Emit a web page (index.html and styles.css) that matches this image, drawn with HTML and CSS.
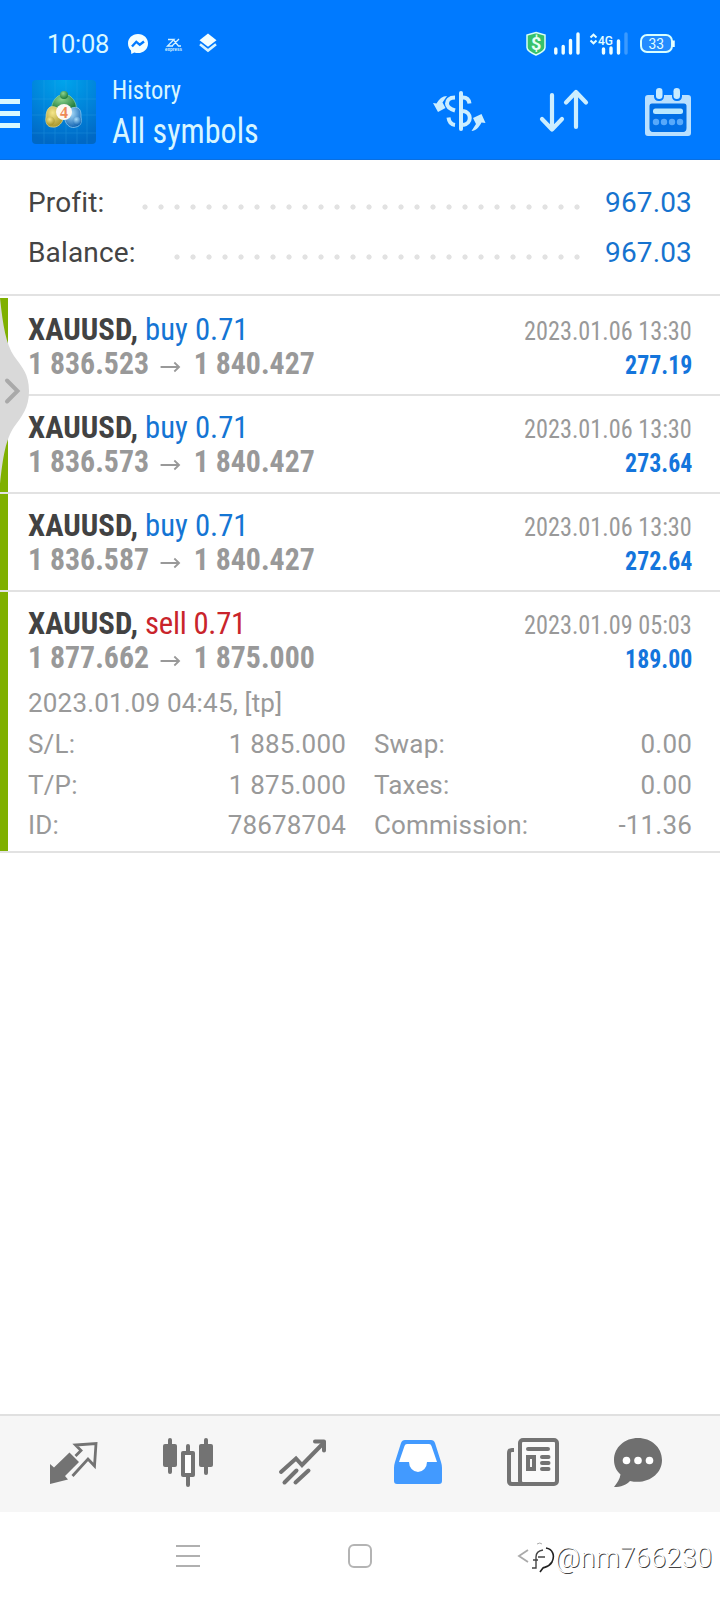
FILE: index.html
```html
<!DOCTYPE html>
<html lang="en">
<head>
<meta charset="utf-8">
<title>History</title>
<link rel="stylesheet" href="styles.css">
</head>
<body>
<div class="app">
  <header class="header">
    <div class="status">
      <span class="clock">10:08</span>
      <svg class="messenger" width="22" height="22" viewBox="0 0 22 22"><path d="M11 1C5 1 1 5.300 1 10.500c0 3 1.400 5.500 3 7.100L4.300 21l3-1.400C15 21.700 21 17 21 10.500 21 5.300 17 1 11 1Z" fill="#f4ffff"/><path d="m5 13.500 4.300-4.700 3.500 3 4.200-3.300" fill="none" stroke="#007aff" stroke-width="2.400"/></svg>
      <svg class="express" width="24" height="24" viewBox="-2 -3 24 24"><path d="M4 1.500h6L3.500 8H9M8 8l7-7M10 2.500 14.500 8H17" fill="none" stroke="#d8f4ff" stroke-width="1.300"/><text x="1" y="12.800" textLength="17" lengthAdjust="spacingAndGlyphs">express</text></svg>
      <svg class="layers" width="20" height="22" viewBox="0 0 20 22"><path d="m10 1.500 8.500 6.800-8.500 6.500-8.500-6.500Z" fill="#f4ffff"/><path d="m2 12.300 8 6.200 8-6.200" fill="none" stroke="#d8f4ff" stroke-width="2.600"/></svg>
      <span class="spacer"></span>
      <svg width="152" height="26" viewBox="0 0 152 26">
        <path d="m11 1.500 9 2.500v12.500c0 3-5.500 6-9 7.500-3.500-1.500-9-4.500-9-7.500V4Z" fill="#37c26b" stroke="#d8fff4" stroke-width="1.500"/>
        <text class="shield-text" x="6" y="19">$</text>
        <path d="M30.800 18v4M38.200 15.500v6.500M45.500 9.500v12.500M53 3v19" stroke="#f0ffff" stroke-width="3.400" stroke-linecap="round" fill="none"/>
        <path d="m65.500 6.500 3-2.800 3 2.800M65.500 9.500l3 2.800 3-2.800" fill="none" stroke="#e4ffff" stroke-width="2"/>
        <text class="net-text" x="73" y="13.500" textLength="15" lengthAdjust="spacingAndGlyphs">4G</text>
        <path d="M78.500 18v4M86 17v5M93.500 10v12" stroke="#f0ffff" stroke-width="3.400" stroke-linecap="round"/>
        <path d="M101 3v19" stroke="#3b9aff" stroke-width="3.400" stroke-linecap="round"/>
        <rect x="116" y="4" width="31" height="17" rx="6" fill="#238cff" stroke="#d8ffff" stroke-width="2"/>
        <path d="M148.500 9.500v6.500" stroke="#e8ffff" stroke-width="2.500"/>
        <text class="batt-text" x="123.500" y="17.500" textLength="15.500" lengthAdjust="spacingAndGlyphs">33</text>
      </svg>
    </div>
    <div class="toolbar">
      <div class="menu"><i></i><i></i><i></i></div>
      <svg class="logo" width="64" height="64" viewBox="0 0 64 64">
        <defs>
          <radialGradient id="bg" cx=".5" cy="0" r="1"><stop offset="0" stop-color="#00a5ec"/><stop offset=".6" stop-color="#0080d8"/><stop offset="1" stop-color="#0068c4"/></radialGradient>
          <radialGradient id="gr" cx=".4" cy=".3" r=".7"><stop offset="0" stop-color="#8fd48c"/><stop offset="1" stop-color="#1d7a3c"/></radialGradient>
          <radialGradient id="ye" cx=".4" cy=".3" r=".7"><stop offset="0" stop-color="#f5e68a"/><stop offset="1" stop-color="#a8962c"/></radialGradient>
          <radialGradient id="bl" cx=".4" cy=".3" r=".7"><stop offset="0" stop-color="#a8dcfa"/><stop offset="1" stop-color="#1667b4"/></radialGradient>
        </defs>
        <rect width="64" height="64" rx="4" fill="url(#bg)"/>
        <path d="M12 0v64M23 0v64M34 0v64M45 0v64M55 0v64M0 19h64M0 35h64M0 53h64" stroke="#3bb0ee" stroke-width=".7" opacity=".35"/>
        <path d="M25 17c2-3 12-3 14 0 4 3 6 9 5 13H20c-1-4 1-10 5-13Z" fill="url(#gr)" stroke="#8fd6a0" stroke-width=".7"/>
        <circle cx="32" cy="15" r="4" fill="url(#gr)"/>
        <path d="M18 27c6-2 14 4 13 12-1 5-6 9-11 8-5 0-7-5-6-10 0-4 1-8 4-10Z" fill="url(#ye)" stroke="#e8dc90" stroke-width=".7"/>
        <circle cx="18.500" cy="41" r="4.200" fill="url(#ye)"/>
        <path d="M46 28c-6-3-15 4-13 12 1 5 6 9 11 7 5-1 6-5 5-10 0-4 0-7-3-9Z" fill="url(#bl)" stroke="#9ad2f6" stroke-width=".7"/>
        <circle cx="45" cy="41" r="4.200" fill="url(#bl)"/>
        <circle cx="32" cy="32" r="8" fill="#fdf8f2"/>
        <text class="four" x="28" y="37.500">4</text>
      </svg>
      <div class="titles">
        <div class="cond title-small">History</div>
        <div class="cond title-big">All symbols</div>
      </div>
      <div class="actions">
        <svg width="54" height="42" viewBox="0 0 54 42">
          <g fill="none" stroke="#cceeff" stroke-width="4"><path d="M28 3v36" stroke-linecap="round"/><path d="M22 7.500c-6 0-8 3-8 6s3 5.500 8 7M30 7.500c3.500 0 6 2 6.500 6M30 21c9 1 9 13 0 14M22 35c-4-.500-6-3-6.500-7.500"/></g>
          <path d="M14 6 9.500 12.500 12.500 18 5 22 0 13l3.500.5C6 9 9.500 6 14 6ZM38.500 41l4.500-7-3-6 8.500-4 4 9-4-.5C46 37.500 43 40.500 38.500 41Z" fill="#cceeff"/>
        </svg>
        <svg width="50" height="44" viewBox="0 0 50 44"><path d="M13 6v34M3 30l10 10.500L23 30M37 38V4M27 13.500 37 3l10 10.500" fill="none" stroke="#cceeff" stroke-width="4.200" stroke-linecap="round" stroke-linejoin="round"/></svg>
        <svg width="46" height="48" viewBox="0 0 46 48">
          <path fill-rule="evenodd" d="M3 7h40q3 0 3 3v35q0 3-3 3H3q-3 0-3-3V10q0-3 3-3ZM7 16q-2 0-2 2v22q0 4 4 4h28q4 0 4-4V18q0-2-2-2Z" fill="#b9e0ff"/>
          <path d="M7 15.500h32q2.500 0 2.500 2.500v22q0 4-4 4h-29q-4 0-4-4V18q0-2.500 2.500-2.500Z" fill="#006fe6"/>
          <rect x="9" y="0" width="10" height="13" rx="4.500" fill="#007aff"/><rect x="27" y="0" width="10" height="13" rx="4.500" fill="#007aff"/>
          <rect x="11" y="0" width="6.500" height="11" rx="3.200" fill="#c8ebff"/><rect x="28.500" y="0" width="6.500" height="11" rx="3.200" fill="#c8ebff"/>
          <rect x="8" y="20.500" width="30" height="5.500" rx="2.500" fill="#b9e8ff"/>
          <g fill="#57a9fb"><circle cx="11" cy="34" r="3.200"/><circle cx="19" cy="34" r="3.200"/><circle cx="27" cy="34" r="3.200"/><circle cx="35" cy="34" r="3.200"/></g>
        </svg>
      </div>
    </div>
  </header>

  <section class="summary">
    <div class="sum-row"><span>Profit:</span><i class="dots dots-profit"></i><b>967.03</b></div>
    <div class="sum-row"><span>Balance:</span><i class="dots dots-balance"></i><b>967.03</b></div>
  </section>

  <main class="deals">
    <article class="deal">
      <div class="line"><div class="cond name"><b>XAUUSD,</b> <span class="buy">buy 0.71</span></div><div class="cond date">2023.01.06 13:30</div></div>
      <div class="line"><div class="cond price"><span>1 836.523</span><svg class="arrow" width="22" height="12" viewBox="0 0 22 12"><path d="M0 6h20M15 1.500 20 6l-5 4.500"/></svg><span>1 840.427</span></div><div class="cond gain">277.19</div></div>
    </article>
    <article class="deal">
      <div class="line"><div class="cond name"><b>XAUUSD,</b> <span class="buy">buy 0.71</span></div><div class="cond date">2023.01.06 13:30</div></div>
      <div class="line"><div class="cond price"><span>1 836.573</span><svg class="arrow" width="22" height="12" viewBox="0 0 22 12"><path d="M0 6h20M15 1.500 20 6l-5 4.500"/></svg><span>1 840.427</span></div><div class="cond gain">273.64</div></div>
    </article>
    <article class="deal">
      <div class="line"><div class="cond name"><b>XAUUSD,</b> <span class="buy">buy 0.71</span></div><div class="cond date">2023.01.06 13:30</div></div>
      <div class="line"><div class="cond price"><span>1 836.587</span><svg class="arrow" width="22" height="12" viewBox="0 0 22 12"><path d="M0 6h20M15 1.500 20 6l-5 4.500"/></svg><span>1 840.427</span></div><div class="cond gain">272.64</div></div>
    </article>
    <article class="deal open">
      <div class="line"><div class="cond name"><b>XAUUSD,</b> <span class="sell">sell 0.71</span></div><div class="cond date">2023.01.09 05:03</div></div>
      <div class="line"><div class="cond price"><span>1 877.662</span><svg class="arrow" width="22" height="12" viewBox="0 0 22 12"><path d="M0 6h20M15 1.500 20 6l-5 4.500"/></svg><span>1 875.000</span></div><div class="cond gain">189.00</div></div>
      <div class="opened">2023.01.09 04:45, [tp]</div>
      <div class="details">
        <span>S/L:</span><span class="val">1 885.000</span><span class="second">Swap:</span><span class="val">0.00</span>
        <span>T/P:</span><span class="val">1 875.000</span><span class="second">Taxes:</span><span class="val">0.00</span>
        <span>ID:</span><span class="val">78678704</span><span class="second">Commission:</span><span class="val">-11.36</span>
      </div>
    </article>
    <svg class="handle" width="30" height="186" viewBox="0 0 30 186"><path d="M0 0C3 28 6 46 14 58c8 11 15 18 15 35s-7 25-15 36C6 141 3 158 0 186Z" fill="#d9d9d9"/><path d="m7 82.500 10.500 10.500L7 103.500" fill="none" stroke="#a9a9a9" stroke-width="4" stroke-linecap="round"/></svg>
  </main>

  <nav class="tabs">
    <svg width="50" height="50" viewBox="0 0 50 50"><path d="M20.500 14.500 30 24 16 38l3 3.500L1 46V26l4 3.500Z" fill="#737373"/><path d="m26.500 18 5.500-5.500L26.500 7 47 5.500 45.500 28l-6.500-7-15.500 17" fill="none" stroke="#737373" stroke-width="2.800"/></svg>
    <svg width="50" height="50" viewBox="0 0 50 50"><g fill="#737373"><rect x="0" y="6" width="14" height="23" rx="2"/><rect x="5" y="0" width="4" height="36" rx="2"/><rect x="36" y="6" width="14" height="23" rx="2"/><rect x="41" y="0" width="4" height="37" rx="2"/><rect x="23" y="6" width="4" height="43" rx="2"/><rect x="18" y="13" width="14" height="26" rx="2"/></g><rect x="22" y="17" width="6" height="18" fill="#fff"/></svg>
    <svg width="50" height="50" viewBox="0 0 50 50"><g fill="none" stroke="#737373" stroke-width="4" stroke-linecap="round"><path d="M3 34 18 20.500 24 27 46 4.500"/><path d="M37 3.500h9v9" stroke-linejoin="round"/><path d="m6.500 44.500 12-12M17.500 44.500l13-12"/></g></svg>
    <svg width="50" height="50" viewBox="0 0 50 50"><path d="M12 2h26q3 0 4 3l6 19q1 3 1 6v13q0 3-3 3H4q-3 0-3-3V30q0-3 1-6l6-19q1-3 4-3Z" fill="#429aff"/><path d="M14 6q-2 0-2.500 2L6 24h10a9 10 0 0 0 18 0h10L38.500 8Q38 6 36 6Z" fill="#fff"/></svg>
    <svg width="52" height="50" viewBox="0 0 52 50"><rect x="13" y="2" width="37" height="44" rx="3" fill="#fafafa" stroke="#737373" stroke-width="4"/><path d="M7 12H5q-3 0-3 3v28q0 3 3 3h12" fill="none" stroke="#737373" stroke-width="4"/><path d="M21 11h20M35 19h6.500M35 25h6.500M35 31h6.500" stroke="#737373" stroke-width="4" stroke-linecap="round"/><path d="M19 17h10v16H19ZM23 21v8h2v-8Z" fill-rule="evenodd" fill="#737373"/></svg>
    <svg width="50" height="50" viewBox="0 0 50 50"><path d="M25 0C12 0 1 9 1 22c0 6 2.500 11 6.500 14.500C7 41 4 45 1 49c7 0 12-2 16-6 18 4 32-7 32-21C49 9 38 0 25 0Z" fill="#6f6f6f"/><g fill="#fff"><circle cx="13.500" cy="22.500" r="3.800"/><circle cx="25" cy="22.500" r="3.800"/><circle cx="36.500" cy="22.500" r="3.800"/></g></svg>
  </nav>

  <footer class="system">
    <svg class="recent" width="24" height="24" viewBox="0 0 24 24"><path d="M0 2h24M0 12h24M0 22h24" stroke="#b0b0b0" stroke-width="2"/></svg>
    <svg class="home" width="24" height="24" viewBox="0 0 24 24"><rect x="1" y="1" width="22" height="22" rx="5" fill="none" stroke="#b4b4b4" stroke-width="2"/></svg>
    <svg class="back" width="38" height="34" viewBox="0 0 38 34"><path d="m11 8-9 6 9 6" fill="none" stroke="#aaa" stroke-width="1.800"/><path d="M15 26h4V15q0-6 7-7M16 18h5M21 15h7" fill="none" stroke="#444" stroke-width="1.400"/><path d="M29 6c7 1 9 8 6 14-3 5-7 5-9 6l-3 4" fill="none" stroke="#222" stroke-width="1.600"/><path d="M20 2q3-2 5 0" fill="none" stroke="#aaa" stroke-width="1"/></svg>
    <span class="handle-name">@nm766230</span>
  </footer>
</div>
</body>
</html>
```

FILE: styles.css
```css
* { box-sizing: border-box; }
body { margin: 0; background: #fff; font-family: Roboto, "Liberation Sans", sans-serif; }
.app { width: 720px; height: 1600px; display: flex; flex-direction: column; overflow: hidden; }
svg { display: block; flex: none; }

.cond { font-family: Roboto, sans-serif; font-stretch: 75%; white-space: nowrap; transform-origin: left; }

.header { height: 160px; flex: none; background: #007aff; border-bottom: 1px solid #0a6fe0; }
.status { height: 72px; padding: 31px 43px 0 47px; display: flex; align-items: flex-start; }
.clock { width: 80px; font-size: 25.500px; line-height: 27px; color: #d8f8ff; letter-spacing: -.3px; }
.messenger { margin-top: 2px; }
.express { margin: 4px 0 0 13px; }
.express text { font: bold 5.500px "Liberation Sans", sans-serif; fill: #d8f4ff; }
.layers { margin: 1px 0 0 12px; }
.spacer { flex: 1; }
.shield-text { font: bold 18px Roboto, sans-serif; fill: #e8fff4; }
.net-text { font: 500 12.500px Roboto, sans-serif; fill: #e4ffff; }
.batt-text { font: 14.500px Roboto, sans-serif; fill: #e4ffff; }

.toolbar { height: 87px; display: flex; align-items: flex-start; }
.menu { width: 20px; margin: 27px 12px 0 0; display: grid; gap: 7px; }
.menu i { height: 5px; background: #d8f8ff; }
.logo { margin-top: 8px; }
.four { font: bold 16px "Liberation Serif", serif; fill: #ee8856; }
.titles { width: 300px; margin-left: 16px; color: #d8f6ff; }
.title-small { font-size: 26px; font-weight: 450; line-height: 30px; margin-top: 3px; transform: scaleX(.94); }
.title-big { font-size: 34.500px; font-weight: 450; line-height: 42px; margin-top: 5px; transform: scaleX(.93); }
.actions { flex: 1; padding: 16px 29px 0 22px; display: flex; justify-content: space-between; }
.actions svg:first-child { margin: 2px 1px 0 -1px; }
.actions svg:nth-child(2) { margin: 1px 3px 0 -3px; }

.summary { height: 136px; flex: none; padding: 18px 28px 0 28px; border-bottom: 2px solid #e2e2e2; }
.sum-row { display: flex; height: 50px; line-height: 50px; font-size: 28px; letter-spacing: .15px; color: #444; }
.sum-row b { font-weight: 400; color: #1673cf; }
.dots { height: 6px; margin: 26px 20px 0 auto; background: radial-gradient(circle at 8px 3px, #e2e2e2 2.200px, transparent 3px) 0 0 / 16px 6px; }
.dots-profit { width: 448px; }
.dots-balance { width: 416px; }

.deals { position: relative; flex: 1; padding-top: 2px; }
.deal { height: 98px; padding: 14px 28px 0 28px; background: linear-gradient(#7fb000, #7fb000) 0 0 / 8px 100% no-repeat; background-clip: padding-box; border-bottom: 2px solid #e2e2e2; }
.line { display: flex; justify-content: space-between; height: 34px; line-height: 34px; }
.name { font-size: 32px; color: #424242; transform: scaleX(.96); }
.buy { color: #1475d4; }
.sell { color: #c9242b; letter-spacing: -.250px; }
.price { font-size: 32px; font-weight: 700; color: #999; display: flex; transform: scaleX(.932); }
.arrow { margin: 15px 14px 0 12px; fill: none; stroke: #999; stroke-width: 2; }
.date { font-size: 26px; color: #999; line-height: 38px; transform: scaleX(.933); transform-origin: right; }
.gain { font-size: 26px; font-weight: 700; color: #1475dc; line-height: 38px; transform: scaleX(.917); transform-origin: right; }
.open { height: 261px; }
.opened { height: 44px; line-height: 44px; font-size: 26px; letter-spacing: .18px; color: #999; margin-top: 7px; }
.details { display: grid; grid-template-columns: 100px 218px 200px 146px; grid-auto-rows: 40.500px; line-height: 40.500px; font-size: 26px; letter-spacing: .18px; color: #999; width: 664px; margin-top: -1px; }
.val { text-align: right; }
.second { padding-left: 28px; }
.handle { position: absolute; left: 0; top: 2px; }

.tabs { height: 98px; flex: none; border-top: 2px solid #e0e0e0; background: #f6f6f6; padding: 22px 0 0 49px; display: flex; gap: 65px; }
.tabs svg:first-child { margin-right: -1px; }
.tabs svg:nth-child(5) { margin-left: -1px; }
.tabs svg:last-child { margin-left: -11px; }
.system { height: 88px; flex: none; display: flex; padding-top: 32px; }
.recent { margin-left: 176px; }
.home { margin-left: 148px; }
.back { margin: -2px 0 0 145px; }
.handle-name { margin-left: 0; font: 300 27.500px/27px Roboto, sans-serif; letter-spacing: .1px; color: #fff; text-shadow: 1px 1px 0 #444; }
```
